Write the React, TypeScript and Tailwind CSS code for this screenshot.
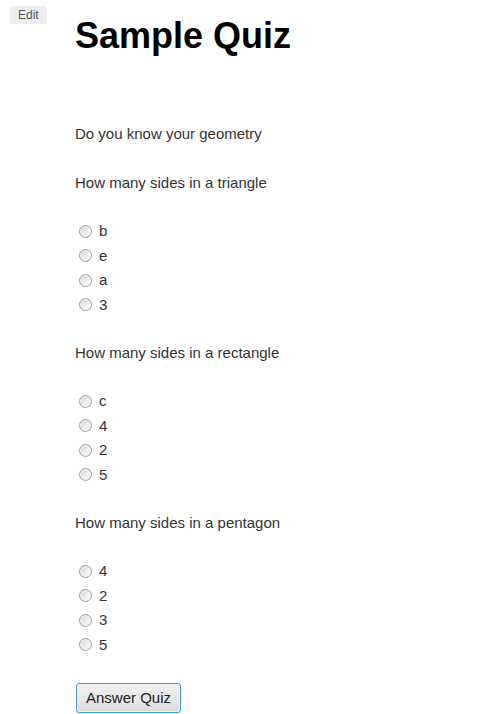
const questions = [
  { text: "How many sides in a triangle", options: ["b", "e", "a", "3"] },
  { text: "How many sides in a rectangle", options: ["c", "4", "2", "5"] },
  { text: "How many sides in a pentagon", options: ["4", "2", "3", "5"] },
];

const Radio = () => (
  <span className="ml-[4px] mr-[7px] inline-block h-[13px] w-[13px] shrink-0 rounded-full border border-[#9c9c9c] bg-gradient-to-br from-[#cfcfcf] via-[#ececec] to-[#fdfdfd] shadow-[inset_0_0_0_1px_#f4f4f4]" />
);

export default function App() {
  return (
    <div className="relative min-h-[714px] bg-white font-['Liberation_Sans',Arial,sans-serif] text-[15px] leading-[20px] text-[#333]">
      <button className="absolute left-[10px] top-[6px] h-[18px] rounded-[3px] bg-[#eeeeee] px-[8px] text-[12px] leading-[18px] text-[#555]">
        Edit
      </button>

      <div className="pl-[75px]">
        <h1 className="pt-[12px] text-[36px] font-bold leading-[48px] text-black">Sample Quiz</h1>

        <p className="mt-[64px]">Do you know your geometry</p>

        <div className="mt-[29px]">
          {questions.map((q) => (
            <div key={q.text} className="mb-[26px]">
              <p>{q.text}</p>
              <ul className="mt-[26px]">
                {q.options.map((o, i) => (
                  <li key={i} className="flex h-[24.5px] items-center">
                    <Radio />
                    <span>{o}</span>
                  </li>
                ))}
              </ul>
            </div>
          ))}
        </div>

        <button className="ml-[1px] h-[30px] rounded-[3px] border border-[#3c9ad4] bg-gradient-to-b from-[#f2f2f2] to-[#dcdcdc] px-[9px] text-[15px] text-[#222] shadow-[inset_0_0_0_1px_#e8f2fa]">
          Answer Quiz
        </button>
      </div>
    </div>
  );
}
